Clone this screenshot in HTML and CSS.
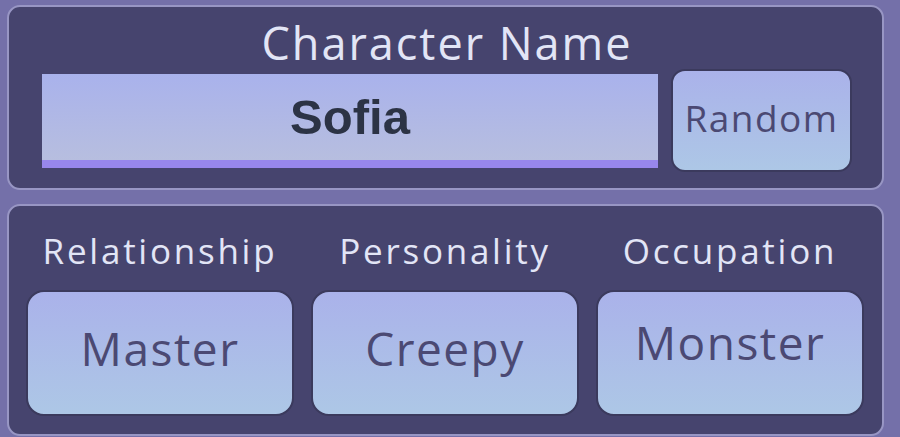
FILE: index.html
```html
<!DOCTYPE html>
<html lang="en">
<head>
    <meta charset="UTF-8">
    <meta name="viewport" content="width=device-width, initial-scale=1.0">
    <title>Character Setup</title>
    <link rel="stylesheet" href="styles.css">
</head>
<body>
    <div class="screen">
        <section class="panel name-panel">
            <h2 class="panel-title">Character Name</h2>
            <div class="name-row">
                <div class="name-input">Sofia</div>
                <button class="pick-btn random-btn">Random</button>
            </div>
        </section>

        <section class="panel traits-panel">
            <div class="trait">
                <span class="trait-label">Relationship</span>
                <button class="pick-btn trait-btn">Master</button>
            </div>
            <div class="trait">
                <span class="trait-label">Personality</span>
                <button class="pick-btn trait-btn">Creepy</button>
            </div>
            <div class="trait">
                <span class="trait-label">Occupation</span>
                <button class="pick-btn trait-btn monster">Monster</button>
            </div>
        </section>
    </div>
</body>
</html>
```

FILE: styles.css
```css
* {
    margin: 0;
    padding: 0;
    box-sizing: border-box;
    font-family: "Open Sans", "DejaVu Sans", sans-serif;
}

body {
    width: 900px;
    height: 437px;
    overflow: hidden;
    background-color: #7470a9;
}

.screen {
    display: flex;
    flex-direction: column;
    gap: 14px;
    padding: 5px 16px 0 7px;
}

.panel {
    background-color: #46446e;
    border: 2px solid #9896c4;
    border-radius: 13px;
}

.name-panel {
    height: 185px;
    padding: 10px 30px 0 33px;
}

.panel-title {
    text-align: center;
    color: #e2e5f6;
    font-weight: 400;
    font-size: 45px;
    line-height: 52px;
    letter-spacing: 2px;
}

.name-row {
    display: flex;
    align-items: center;
    gap: 13px;
}

.name-input {
    flex-shrink: 0;
    width: 616px;
    height: 94px;
    display: flex;
    align-items: center;
    justify-content: center;
    background: linear-gradient(#a9b2ec, #b7bedf);
    border-bottom: 8px solid #9887ec;
    color: #2c3345;
    font-family: "Liberation Sans", Arial, sans-serif;
    font-weight: bold;
    font-size: 49px;
}

.pick-btn {
    flex-shrink: 0;
    background: linear-gradient(#aab2ea, #adc7e6);
    border: 2px solid #3b3a5d;
    color: #4b4973;
    cursor: pointer;
}

.random-btn {
    width: 181px;
    height: 103px;
    border-radius: 14px;
    font-size: 37px;
    letter-spacing: 1.5px;
    padding-bottom: 6px;
}

.traits-panel {
    height: 232px;
    display: grid;
    grid-template-columns: repeat(3, 268px);
    column-gap: 17px;
    padding: 18px 0 0 17px;
}

.trait {
    display: flex;
    flex-direction: column;
    align-items: center;
    gap: 12px;
}

.trait-label {
    color: #e2e5f6;
    font-size: 35px;
    line-height: 54px;
    letter-spacing: 2.75px;
}

.trait-btn {
    width: 268px;
    height: 126px;
    border-radius: 18px;
    font-size: 46px;
    letter-spacing: 1.5px;
    padding-bottom: 10px;
}

.trait-btn.monster {
    padding-bottom: 22px;
}
```
